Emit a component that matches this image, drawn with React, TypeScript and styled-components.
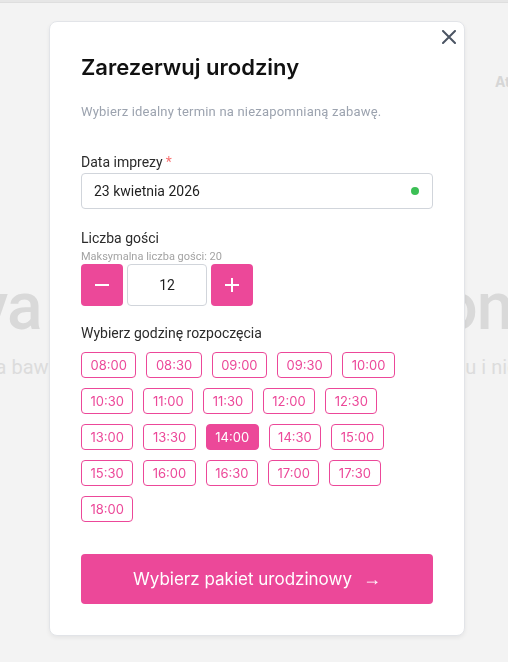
import React, { useState } from "react";
import styled, { createGlobalStyle } from "styled-components";

const GlobalStyle = createGlobalStyle`
  html, body { margin: 0; padding: 0; }
  body {
    background: #f3f3f3;
    font-family: Roboto, "Noto Sans", sans-serif;
    overflow: hidden;
  }
  * { box-sizing: border-box; }
`;

const PINK = "#ec4899";

const Page = styled.div`
  min-height: 662px;
  background: #f3f3f3;
  overflow: hidden;
`;

const TopBar = styled.div`
  height: 3px;
  background: #e6e6e6;
  border-bottom: 1px solid #dedede;
`;

const Nav = styled.nav`
  display: flex;
  justify-content: flex-end;
  padding: 70px 0 0;
  height: 120px;
  margin-right: -44px;
`;

const NavItem = styled.span`
  font-family: Inter, sans-serif;
  font-weight: 700;
  font-size: 14px;
  color: #d6d6d6;
`;

const Hero = styled.section`
  display: flex;
  flex-direction: column;
  align-items: center;
  padding-top: 145px;
`;

const HeroTitle = styled.h1`
  margin: 0;
  white-space: nowrap;
  font-family: Roboto, sans-serif;
  font-weight: 500;
  font-size: 66px;
  letter-spacing: -1px;
  color: #d9d9d9;
`;

const HeroText = styled.p`
  margin: 10px 0 0;
  white-space: nowrap;
  font-size: 20px;
  color: #dcdcdc;
`;

const Overlay = styled.div`
  position: fixed;
  inset: 0;
  display: flex;
  align-items: flex-start;
  padding: 21px 0 0 49px;
`;

const Modal = styled.div`
  position: relative;
  width: 416px;
  background: #ffffff;
  border-radius: 8px;
  border: 1px solid #e2e4e8;
  box-shadow: 0 2px 4px rgba(0, 0, 0, 0.06);
  padding: 31px;
`;

const CloseButton = styled.button`
  position: absolute;
  top: 8px;
  right: 8px;
  width: 14px;
  height: 14px;
  padding: 0;
  border: 0;
  background: none;
  cursor: pointer;
  display: flex;
`;

const Title = styled.h2`
  margin: 0 0 21px;
  font-family: Inter, sans-serif;
  font-weight: 600;
  font-size: 22px;
  line-height: 28px;
  color: #111111;
`;

const Subtitle = styled.p`
  margin: 0 0 30px;
  font-size: 13px;
  line-height: 20px;
  letter-spacing: 0.2px;
  color: #9ca3af;
`;

const Label = styled.div<{ $gap?: number }>`
  font-size: 14px;
  line-height: 20px;
  color: #2b2b2b;
  margin-bottom: ${(p) => p.$gap ?? 1}px;
`;

const Required = styled.span`
  color: #f87171;
  margin-left: 3px;
`;

const DateField = styled.div`
  height: 36px;
  border: 1px solid #d1d5db;
  border-radius: 4px;
  display: flex;
  align-items: center;
  justify-content: space-between;
  padding: 0 13px 0 12px;
  font-size: 14px;
  color: #1f1f1f;
  margin-bottom: 19px;
`;

const Dot = styled.span`
  width: 8px;
  height: 8px;
  border-radius: 50%;
  background: #3cbf55;
`;

const Hint = styled.div`
  font-size: 11px;
  line-height: 14px;
  color: #a3a3a3;
  margin: 2px 0 0;
`;

const Stepper = styled.div`
  display: flex;
  gap: 4px;
  margin-bottom: 17px;
`;

const StepButton = styled.button`
  width: 42px;
  height: 42px;
  border: 0;
  border-radius: 4px;
  background: ${PINK};
  display: flex;
  align-items: center;
  justify-content: center;
  padding: 0;
  cursor: pointer;
`;

const CountBox = styled.div`
  width: 80px;
  height: 42px;
  border: 1px solid #d1d5db;
  border-radius: 4px;
  display: flex;
  align-items: center;
  justify-content: center;
  font-size: 14px;
  color: #1f1f1f;
`;

const Slots = styled.div`
  display: flex;
  flex-direction: column;
  gap: 10px;
  margin-top: 9px;
  margin-bottom: 32px;
`;

const SlotRow = styled.div`
  display: flex;
  gap: 10px;
`;

const Slot = styled.button<{ $active?: boolean }>`
  height: 26px;
  padding: 0 8.5px;
  border: 1px solid ${PINK};
  border-radius: 4px;
  background: ${(p) => (p.$active ? PINK : "#fff")};
  color: ${(p) => (p.$active ? "#fff" : PINK)};
  font-family: Inter, sans-serif;
  font-size: 13px;
  line-height: 24px;
  cursor: pointer;
`;

const Submit = styled.button`
  width: 100%;
  height: 50px;
  border: 0;
  border-radius: 4px;
  background: ${PINK};
  color: #fff;
  font-family: Inter, sans-serif;
  font-size: 17px;
  font-weight: 400;
  display: flex;
  align-items: center;
  justify-content: center;
  gap: 11px;
  cursor: pointer;
`;

const Arrow = styled.span`
  font-family: "Liberation Sans", sans-serif;
  font-size: 18px;
`;

const times = [
  "08:00", "08:30", "09:00", "09:30", "10:00",
  "10:30", "11:00", "11:30", "12:00", "12:30",
  "13:00", "13:30", "14:00", "14:30", "15:00",
  "15:30", "16:00", "16:30", "17:00", "17:30",
  "18:00",
];

const rows: string[][] = [];
for (let i = 0; i < times.length; i += 5) rows.push(times.slice(i, i + 5));

export default function App() {
  const [count, setCount] = useState(12);
  const [selected, setSelected] = useState("14:00");

  return (
    <>
      <GlobalStyle />
      <Page>
        <TopBar />
        <Nav>
          <NavItem>Atrakcje</NavItem>
        </Nav>
        <Hero>
          <HeroTitle>Nova – rezerwacja online</HeroTitle>
          <HeroText>Nasza najlepsza bawialnia w mieście – moc atrakcji dla dzieci i ruchu i niezapomnianych</HeroText>
        </Hero>
      </Page>
      <Overlay>
        <Modal>
          <CloseButton aria-label="Zamknij">
            <svg width="14" height="14" viewBox="0 0 14 14">
              <path d="M1 1L13 13M13 1L1 13" stroke="#4b5563" strokeWidth="2" strokeLinecap="round" />
            </svg>
          </CloseButton>
          <Title>Zarezerwuj urodziny</Title>
          <Subtitle>Wybierz idealny termin na niezapomnianą zabawę.</Subtitle>

          <Label>
            Data imprezy<Required>*</Required>
          </Label>
          <DateField>
            <span>23 kwietnia 2026</span>
            <Dot />
          </DateField>

          <Label $gap={0}>Liczba gości</Label>
          <Hint>Maksymalna liczba gości: 20</Hint>
          <Stepper>
            <StepButton onClick={() => setCount((c) => Math.max(1, c - 1))} aria-label="Mniej">
              <svg width="14" height="14" viewBox="0 0 14 14">
                <path d="M0 7H14" stroke="#fff" strokeWidth="2" />
              </svg>
            </StepButton>
            <CountBox>{count}</CountBox>
            <StepButton onClick={() => setCount((c) => Math.min(20, c + 1))} aria-label="Więcej">
              <svg width="14" height="14" viewBox="0 0 14 14">
                <path d="M0 7H14M7 0V14" stroke="#fff" strokeWidth="2" />
              </svg>
            </StepButton>
          </Stepper>

          <Label $gap={0}>Wybierz godzinę rozpoczęcia</Label>
          <Slots>
            {rows.map((row, i) => (
              <SlotRow key={i}>
                {row.map((t) => (
                  <Slot key={t} $active={t === selected} onClick={() => setSelected(t)}>
                    {t}
                  </Slot>
                ))}
              </SlotRow>
            ))}
          </Slots>

          <Submit>
            <span>Wybierz pakiet urodzinowy</span>
            <Arrow>→</Arrow>
          </Submit>
        </Modal>
      </Overlay>
    </>
  );
}
